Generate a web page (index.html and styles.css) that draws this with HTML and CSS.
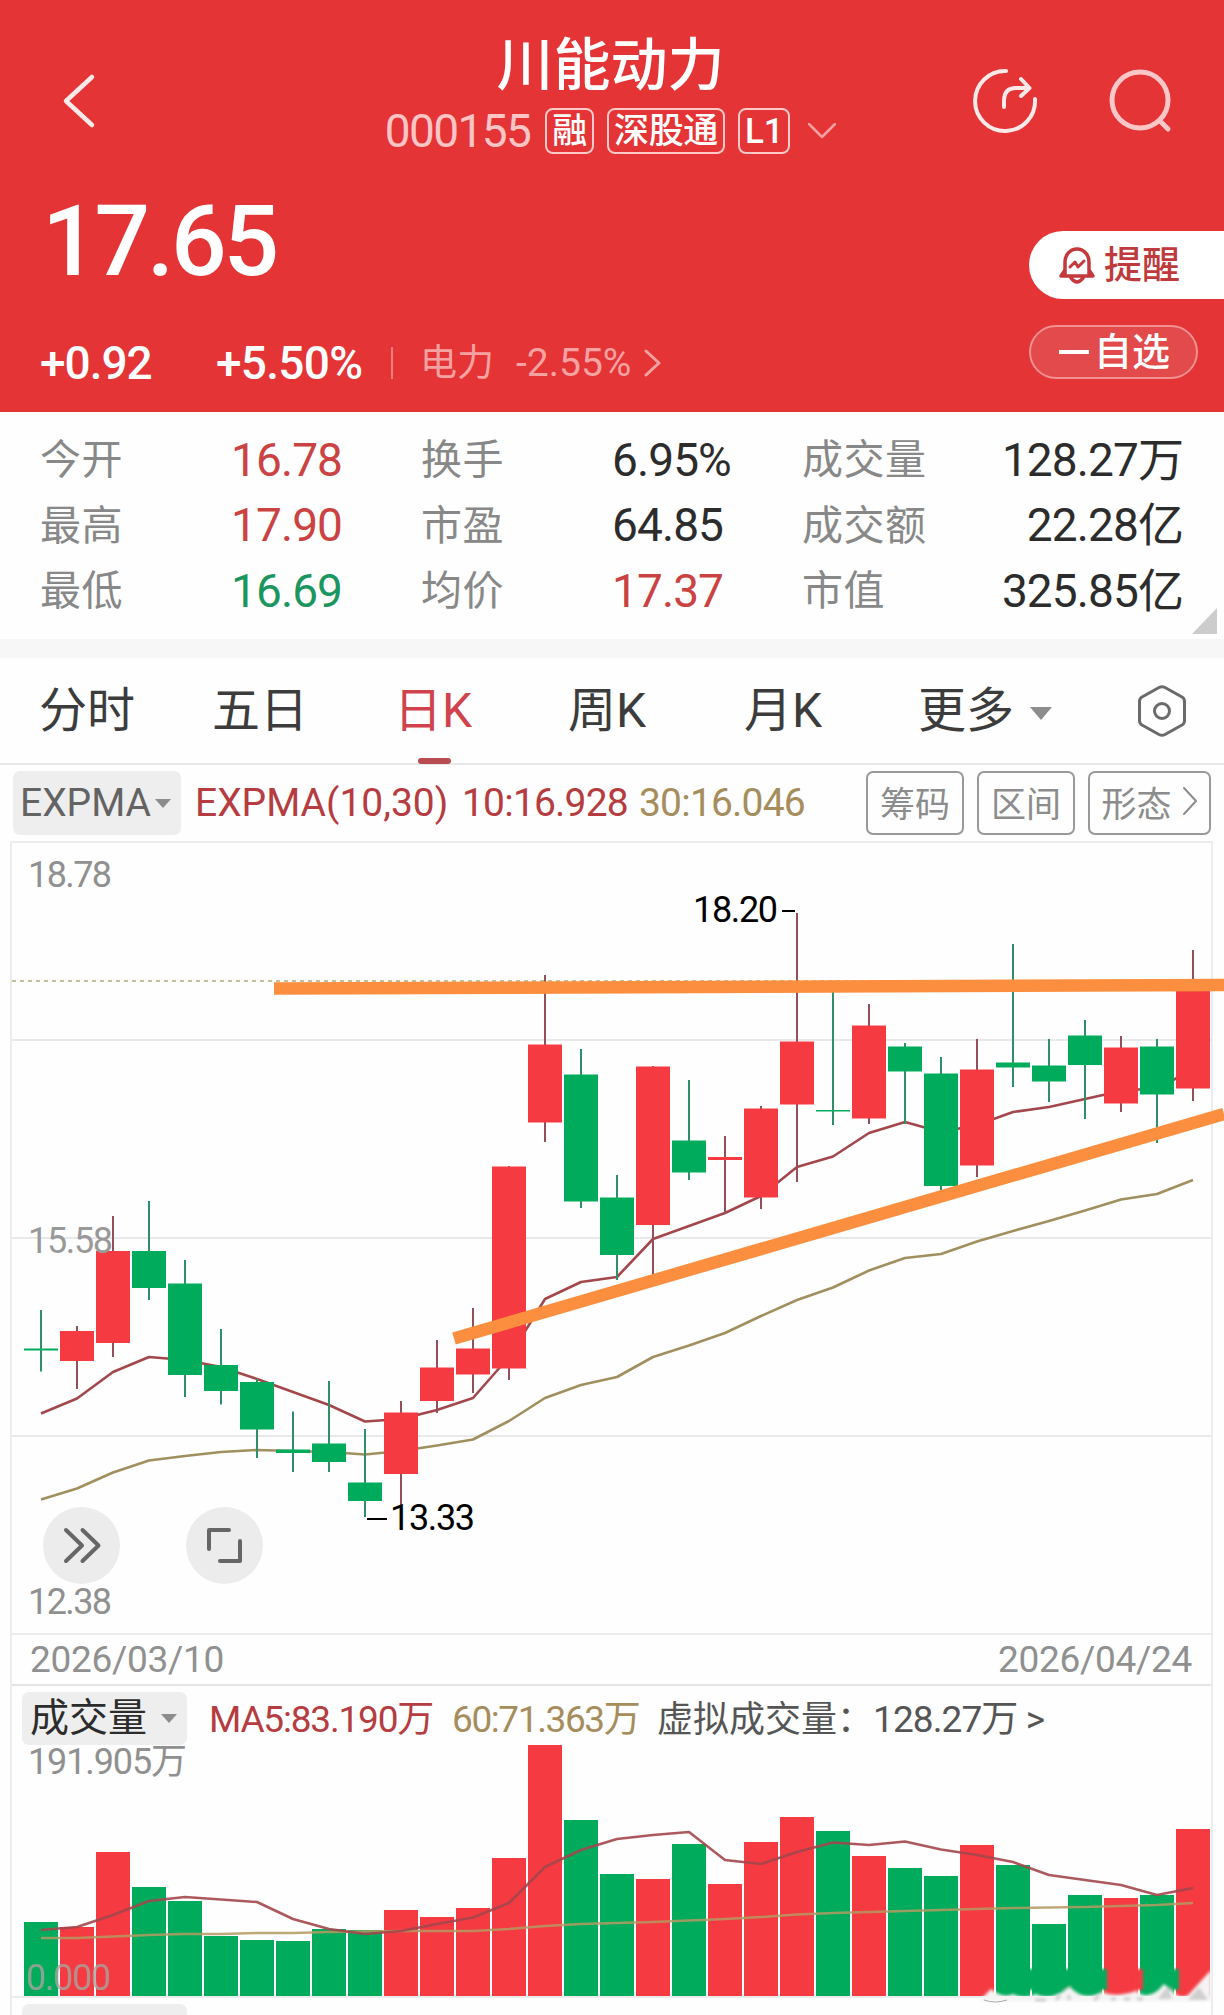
FILE: index.html
```html
<!DOCTYPE html>
<html lang="zh-CN">
<head>
  <meta charset="UTF-8">
  <title>川能动力 000155</title>
  <link rel="stylesheet" href="styles.css">
</head>
<body>
  <header class="header">
    <div class="nav">
      <svg class="icon-back" width="36" height="58" viewBox="0 0 36 58"><path d="M31 5 L5 29 L31 53"/></svg>
      <div class="nav-title">
        <h1>川能动力</h1>
        <div class="sub">
          <span class="code">000155</span>
          <span class="tag">融</span>
          <span class="tag">深股通</span>
          <span class="tag">L1</span>
          <svg class="icon-down" width="28" height="16" viewBox="0 0 28 16"><path d="M1 1 L14 14 L27 1"/></svg>
        </div>
      </div>
      <div class="nav-icons">
        <svg width="66" height="66" viewBox="0 0 66 66">
          <path d="M34 3 A30 30 0 1 0 63 31"/>
          <path d="M32 39 V33 Q32 20 44 20 H56 M49 11 L57.500 20 L49 28"/>
        </svg>
        <svg class="icon-search" width="64" height="66" viewBox="0 0 64 66">
          <circle cx="31" cy="32" r="28"/>
          <path d="M51 53 L59 61"/>
        </svg>
      </div>
    </div>
    <div class="quote">
      <div class="quote-left">
        <div class="price">17.65</div>
        <div class="change">
          <span class="diff">+0.92</span>
          <span class="pct">+5.50%</span>
          <span class="sector">电力</span>
          <span class="sector-pct">-2.55%</span>
          <svg width="18" height="28" viewBox="0 0 18 28"><path d="M2 2 L15 14 L2 26"/></svg>
        </div>
      </div>
      <div class="quote-right">
        <div class="btn-remind">
          <svg width="38" height="40" viewBox="0 0 38 40">
            <path d="M7 31 V17 A12 13 0 0 1 31 17 V31 M7 25 L3 31 H35 L31 25 M13 33 Q19 41 25 33"/>
            <path class="thin" d="M12 22 L17 17 L20 22 L26 16"/>
          </svg>
          <span>提醒</span>
        </div>
        <div class="btn-watch"><i></i><span>自选</span></div>
      </div>
    </div>
  </header>

  <section class="stats">
    <span class="label">今开</span><span class="up">16.78</span>
    <span class="label">换手</span><span>6.95%</span>
    <span class="label">成交量</span><span class="right">128.27万</span>
    <span class="label">最高</span><span class="up">17.90</span>
    <span class="label">市盈</span><span>64.85</span>
    <span class="label">成交额</span><span class="right">22.28亿</span>
    <span class="label">最低</span><span class="down">16.69</span>
    <span class="label">均价</span><span class="up">17.37</span>
    <span class="label">市值</span><span class="right">325.85亿</span>
    <div class="corner"></div>
  </section>

  <nav class="tabs">
    <span>分时</span>
    <span>五日</span>
    <span class="active">日K</span>
    <span>周K</span>
    <span>月K</span>
    <span class="more">更多<i class="caret"></i></span>
    <svg width="50" height="54" viewBox="0 0 50 54">
      <path d="M22 3.500 Q25 2 28 3.500 L45 13 Q47.500 14.500 47.500 17.500 V36.500 Q47.500 39.500 45 41 L28 50.500 Q25 52 22 50.500 L5 41 Q2.500 39.500 2.500 36.500 V17.500 Q2.500 14.500 5 13 Z"/>
      <circle cx="25" cy="27" r="7.500"/>
    </svg>
  </nav>

  <div class="indicator">
    <div class="select">EXPMA<i class="caret"></i></div>
    <span class="ema-name">EXPMA(10,30)</span>
    <span class="ema10">10:16.928</span>
    <span class="ema30">30:16.046</span>
    <div class="tools">
      <button>筹码</button>
      <button>区间</button>
      <button class="shape">形态<svg width="15" height="30" viewBox="0 0 15 30"><path d="M1 2 L13 15 L1 28"/></svg></button>
    </div>
  </div>

  <main class="panels">
    <svg id="kline" width="1199" height="790" viewBox="12 843 1199 790"></svg>
    <div class="dates"><span>2026/03/10</span><span>2026/04/24</span></div>
    <div class="vol-head">
      <div class="select">成交量<i class="caret"></i></div>
      <span class="ma5">MA5:83.190万</span>
      <span class="ma60">60:71.363万</span>
      <span class="virtual">虚拟成交量：</span>
      <span class="virtual-num">128.27万 &gt;</span>
    </div>
    <svg id="volume" width="1199" height="253" viewBox="12 1743 1199 253"></svg>
    <div class="next-panel"><div class="select"></div></div>
  </main>
  <script src="script.js"></script>
</body>
</html>
```

FILE: styles.css
```css
* {
  box-sizing: border-box;
}
body {
  margin: 0;
  width: 1224px;
  height: 2015px;
  overflow: hidden;
  background-color: #fefefe;
  font-family: Roboto, "Noto Sans CJK SC", sans-serif;
  line-height: 1;
  color: #2c2c2c;
}
svg {
  display: block;
  fill: none;
  stroke-linecap: round;
  stroke-linejoin: round;
}

/* header */
.header {
  height: 412px;
  background-color: #e43436;
  color: #fff;
}
.nav {
  display: grid;
  grid-template-columns: 1fr auto 1fr;
  height: 154px;
  padding-top: 36px;
}
.nav svg {
  stroke: #ffe9e9;
  stroke-width: 4;
}
.nav .icon-back {
  margin: 36px 0 0 61px;
  stroke-width: 4.500;
}
.nav-title {
  display: flex;
  flex-direction: column;
  align-items: center;
  gap: 14px;
  margin-right: 3px;
}
h1 {
  margin: 0;
  height: 58px;
  font-size: 57px;
  line-height: 59px;
  font-weight: 500;
}
.sub {
  display: flex;
  align-items: center;
  height: 46px;
}
.code {
  margin-right: 15px;
  font-size: 46px;
  letter-spacing: -1.600px;
  color: #ffc4c6;
}
.tag {
  height: 46px;
  margin-right: 13px;
  padding: 0 5px;
  border: 2px solid #ffc9c9;
  border-radius: 8px;
  font-size: 35px;
  line-height: 43px;
  font-weight: 500;
  letter-spacing: -.300px;
}
.nav .icon-down {
  margin-left: 5px;
  stroke: #f7a0a0;
  stroke-width: 2.500;
}
.nav-icons {
  display: flex;
  justify-content: flex-end;
  gap: 71px;
  margin: 32px 51px 0 0;
}
.nav .icon-search {
  stroke: #ffc6c8;
  stroke-width: 5;
}
.quote {
  display: flex;
  justify-content: space-between;
}
.price {
  margin: 39px 0 0 42px;
  font-size: 98px;
  font-weight: 500;
  letter-spacing: -3.200px;
}
.change {
  display: flex;
  align-items: center;
  height: 46px;
  margin: 49px 0 0 40px;
  font-size: 46px;
}
.diff {
  width: 176px;
  font-weight: 500;
  letter-spacing: -1px;
}
.pct {
  width: 177px;
  height: 32px;
  line-height: 32px;
  font-weight: 500;
  border-right: 2px solid #f07c7c;
  letter-spacing: -.700px;
}
.sector {
  margin-left: 27px;
  font-size: 37px;
  color: #f7a2a2;
}
.sector-pct {
  margin: 0 13px 0 22px;
  font-size: 39px;
  color: #f7a2a2;
}
.change svg {
  stroke: #f7a2a2;
  stroke-width: 3;
}
.quote-right {
  width: 195px;
  padding-top: 77px;
}
.btn-remind {
  display: flex;
  align-items: center;
  gap: 8px;
  height: 68px;
  padding-left: 29px;
  border-radius: 34px 0 0 34px;
  background-color: #fff;
  color: #bf3a3c;
  font-size: 38px;
  font-weight: 500;
}
.btn-remind svg {
  stroke: #c4393c;
  stroke-width: 3.500;
}
.btn-remind .thin {
  stroke-width: 3;
}
.btn-watch {
  display: flex;
  align-items: center;
  gap: 5px;
  width: 169px;
  height: 54px;
  margin-top: 26px;
  padding-left: 28px;
  border: 2px solid #f39092;
  border-radius: 27px;
  background-color: #e24a4c;
  font-size: 38px;
  font-weight: 500;
}
.btn-watch i {
  width: 30px;
  height: 4px;
  background-color: #fff;
}

/* stats */
.stats {
  position: relative;
  display: grid;
  grid-template-columns: 191px 190px 191px 190px 140px 1fr;
  grid-auto-rows: 65.500px;
  align-items: center;
  height: 246px;
  padding: 15px 41px 0 40px;
  border-bottom: 19px solid #f7f7f7;
  font-size: 46px;
  letter-spacing: -.900px;
  white-space: nowrap;
}
.label {
  padding-top: 2px;
  font-size: 41px;
  letter-spacing: .500px;
  color: #888;
}
.right {
  justify-self: end;
}
.up {
  color: #cb4243;
}
.down {
  color: #1a965e;
}
.corner {
  position: absolute;
  right: 7px;
  bottom: 5px;
  border-left: 25px solid transparent;
  border-bottom: 26px solid #ccc;
}

/* period tabs */
.tabs {
  display: flex;
  align-items: center;
  height: 107px;
  padding-left: 39px;
  border-bottom: 2px solid #e8e8e8;
  font-size: 48px;
  color: #3c3c3c;
}
.tabs span {
  position: relative;
  width: 173px;
  white-space: nowrap;
}
.tabs span:nth-child(2) {
  width: 182px;
}
.tabs span:nth-child(3) {
  width: 174px;
}
.tabs span:nth-child(4) {
  width: 176px;
}
.tabs span:nth-child(5) {
  width: 174px;
}
.tabs .more {
  width: 219px;
}
.tabs .active {
  color: #d0434d;
}
.tabs .active::after {
  content: "";
  position: absolute;
  left: 24px;
  bottom: -29px;
  width: 33px;
  height: 6px;
  border-radius: 3px;
  background-color: #b94b53;
}
.tabs svg {
  stroke: #6a6a6a;
  stroke-width: 3;
}
.caret {
  display: inline-block;
  border: 8px solid transparent;
  border-top: 9px solid #8c8c8c;
  border-bottom: 0;
}
.tabs .caret {
  margin-left: 16px;
  border-width: 13px 11px 0;
  vertical-align: 7px;
}

/* indicator row */
.indicator {
  display: flex;
  align-items: center;
  height: 76px;
  padding: 2px 13px 0;
  border-bottom: 2px solid transparent;
  font-size: 39px;
  white-space: nowrap;
}
.select {
  display: flex;
  align-items: center;
  border-radius: 7px;
  background-color: #eee;
}
.indicator .select {
  width: 168px;
  height: 64px;
  padding-left: 7px;
  gap: 4px;
  color: #636363;
}
.ema-name {
  width: 267px;
  margin-left: 14px;
  color: #b53c40;
}
.ema10 {
  width: 177px;
  letter-spacing: -.800px;
  color: #b53c40;
}
.ema30 {
  letter-spacing: -.800px;
  color: #a58d5c;
}
.tools {
  display: flex;
  gap: 13px;
  margin-left: auto;
}
.tools button {
  width: 98px;
  height: 64px;
  padding: 0 0 4px;
  border: 2px solid #999;
  border-radius: 7px;
  background: none;
  font: 35px Roboto, "Noto Sans CJK SC", sans-serif;
  color: #8c8c8c;
}
.tools .shape {
  display: flex;
  align-items: center;
  justify-content: center;
  gap: 11px;
  width: 123px;
}
.tools svg {
  stroke: #8c8c8c;
  stroke-width: 2;
}

/* chart panels */
.panels {
  height: 1174px;
  margin: 0 11px 0 10px;
  border: 2px solid #ececec;
  border-bottom: 0;
}
.panels > svg {
  overflow: visible;
  stroke-linecap: butt;
}
.panels text {
  font-size: 36px;
  stroke: none;
}
.dates {
  display: flex;
  justify-content: space-between;
  align-items: center;
  height: 53px;
  padding: 0 19px 0 18px;
  border-top: 2px solid #ececec;
  border-bottom: 2px solid #e4e4e4;
  font-size: 37px;
  letter-spacing: -.300px;
  color: #909090;
}
.vol-head {
  display: flex;
  align-items: center;
  height: 57px;
  padding: 7px 0 0 10px;
  font-size: 37px;
  white-space: nowrap;
}
.vol-head span {
  padding-top: 3px;
}
.panels .select {
  width: 165px;
  height: 53px;
  padding-left: 8px;
  gap: 14px;
  font-size: 39px;
}
.ma5 {
  width: 243px;
  margin-left: 22px;
  letter-spacing: -1.200px;
  color: #b53c40;
}
.ma60 {
  width: 205px;
  letter-spacing: -1.400px;
  color: #a58d5c;
}
.virtual {
  width: 216px;
  font-size: 36px;
  color: #555;
}
.virtual-num {
  color: #555;
  letter-spacing: -.900px;
}
.next-panel {
  height: 19px;
  padding: 6px 0 0 10px;
  border-top: 2px solid #ececec;
}
```

FILE: script.js
```js
var RED = '#f53a42';
var GREEN = '#00ab5c';
var RED_WICK = '#93505a';
var GREEN_WICK = '#2f8f68';
var MA_RED = '#a3474c';
var MA_GOLD = '#a0905f';

// [up, body top, body bottom, wick top, wick bottom, volume top]
var days = [
  [0, 1348.5, 1350.5, 1310, 1371.5, 1922],
  [1, 1331, 1361, 1326, 1389, 1927],
  [1, 1251, 1343, 1216, 1357, 1852],
  [0, 1251, 1288, 1201, 1300, 1887],
  [0, 1283.5, 1375, 1260, 1397, 1901],
  [0, 1365, 1391, 1329, 1404.5, 1936],
  [0, 1382, 1429.5, 1379, 1458, 1940],
  [0, 1449.5, 1453, 1411.5, 1472, 1941],
  [0, 1443.5, 1462, 1381, 1472, 1929],
  [0, 1482.5, 1501, 1429, 1517, 1930],
  [1, 1412.5, 1474, 1401, 1514, 1910],
  [1, 1367.5, 1401, 1340, 1413, 1917],
  [1, 1348.5, 1374.5, 1308, 1393, 1908],
  [1, 1166.5, 1368.5, 1166, 1380, 1858],
  [1, 1044.5, 1122.5, 975, 1142, 1745],
  [0, 1074.5, 1201.5, 1049, 1208, 1820],
  [0, 1197.5, 1255, 1175, 1280, 1874],
  [1, 1066.5, 1225, 1066, 1275, 1879],
  [0, 1140.5, 1172.5, 1080, 1180, 1844],
  [1, 1157, 1160, 1136, 1213, 1884],
  [1, 1108.5, 1197.5, 1106, 1209, 1842],
  [1, 1041.5, 1104.5, 913, 1182, 1817],
  [0, 1110, 1111.5, 985, 1125, 1831],
  [1, 1025.5, 1118.5, 1004, 1124, 1856],
  [0, 1046.5, 1071.5, 1043, 1124, 1868],
  [0, 1073.5, 1186, 1057, 1190, 1876],
  [1, 1069.5, 1165.5, 1039, 1177, 1845],
  [0, 1062.5, 1067.5, 944, 1087, 1865],
  [0, 1065.5, 1081.5, 1039, 1102, 1924],
  [0, 1035.5, 1065, 1020, 1119, 1895],
  [1, 1047.5, 1103.5, 1036, 1112, 1898],
  [0, 1046.5, 1094.5, 1039, 1143, 1895],
  [1, 990, 1088.5, 950, 1101, 1829]
];

var ema10 = [1413.5, 1398.5, 1372, 1357, 1360, 1367, 1379, 1392, 1405, 1421.5, 1419, 1410, 1398, 1357, 1299, 1282, 1277, 1239, 1226, 1213, 1196, 1167, 1156.5, 1133, 1122, 1132, 1125, 1112, 1107, 1099, 1091, 1088, 1070];
var ema30 = [1499.5, 1488.5, 1472.5, 1460.5, 1456, 1452, 1450, 1451, 1452, 1454.5, 1451, 1445.5, 1439.5, 1421, 1398, 1385, 1377, 1357, 1345.5, 1333, 1316, 1300, 1287.5, 1270.5, 1258, 1254, 1241.5, 1231, 1221, 1210.5, 1199.5, 1194, 1180];
var ma5 = [1930, 1927, 1915, 1901, 1897, 1899.5, 1902, 1919, 1929, 1934, 1931, 1924, 1917.5, 1903, 1867, 1850, 1839, 1835, 1832, 1860, 1864, 1852, 1842.5, 1845, 1841.5, 1849.5, 1855, 1862, 1875, 1880, 1885, 1895, 1888];
var ma60 = [1938, 1938, 1936.5, 1935, 1934, 1934, 1933, 1933, 1932, 1931.5, 1931, 1931, 1931, 1929, 1926, 1924, 1923, 1922, 1920.5, 1919, 1917, 1914.5, 1913, 1912, 1911, 1910, 1909, 1908, 1907.5, 1907, 1906, 1905, 1903];

function cx(i) {
  return 41 + i * 36;
}

function rect(x, y, w, h, fill) {
  return '<rect x="' + x + '" y="' + y + '" width="' + w + '" height="' + h + '" fill="' + fill + '"/>';
}

function line(x1, y1, x2, y2, color, width, extra) {
  return '<line x1="' + x1 + '" y1="' + y1 + '" x2="' + x2 + '" y2="' + y2 + '" stroke="' + color + '" stroke-width="' + width + '" ' + (extra || '') + '/>';
}

function curve(values, color, extra) {
  var pts = values.map(function (v, i) { return cx(i).toFixed(1) + ',' + v; }).join(' ');
  return '<polyline points="' + pts + '" stroke="' + color + '" stroke-width="2.6" ' + (extra || '') + '/>';
}

function label(x, y, w, str, color) {
  return '<text x="' + x + '" y="' + y + '" textLength="' + w + '" fill="' + color + '">' + str + '</text>';
}

function drawKline() {
  var s = '';
  [1040, 1238, 1436].forEach(function (y) {
    s += line(12, y, 1211, y, '#e9e9e9', 2);
  });
  s += line(12, 981, 1211, 981, '#b3ab78', 1.5, 'stroke-dasharray="4 4"');
  s += curve(ema30, MA_GOLD) + curve(ema10, MA_RED);
  days.forEach(function (d, i) {
    var x = cx(i);
    s += line(x, d[3], x, d[4], d[0] ? RED_WICK : GREEN_WICK, 2);
    s += rect(x - 17, d[1], 34, d[2] - d[1], d[0] ? RED : GREEN);
  });
  s += label(28, 887, 84, '18.78', '#909090');
  s += label(28, 1253, 85, '15.58', '#999');
  s += label(28, 1614, 84, '12.38', '#909090');
  s += label(693, 922, 85, '18.20', '#000') + line(782, 911, 795, 911, '#000', 2);
  s += label(390, 1530, 85, '13.33', '#000') + line(367, 1519, 387, 1519, '#000', 2);

  // trend lines
  s += line(274, 988.5, 1224, 985, '#fb8f3f', 12.5);
  s += line(454, 1338.5, 1224, 1114, '#fb8f3f', 12.5);

  // floating buttons
  s += '<circle cx="81.500" cy="1545.500" r="38.500" fill="#ececec"/><circle cx="224.500" cy="1545.500" r="38.500" fill="#ececec"/>';
  s += '<path d="M66 1530 L82 1545.500 L66 1561 M82.500 1530 L98.500 1545.500 L82.500 1561 M229 1530 H209 V1549 M240 1541 V1561 H220" stroke="#666" stroke-width="4" stroke-linecap="round"/>';
  document.getElementById('kline').innerHTML = s;
}

// smudge over the feet of the last few bars
function drawSmudge() {
  var s = '<defs><filter id="soft" x="-5%" y="-50%" width="110%" height="200%"><feGaussianBlur stdDeviation="1.6"/></filter></defs>';
  s += '<g filter="url(#soft)">';
  for (var i = 27; i < 32; i++) {
    s += rect(cx(i) + 14, 1969, 8, 21, days[i][0] ? RED : GREEN);
  }
  s += '<path d="M981 1999 L991 1989 Q1003 1999 1013 1994 Q1024 2000 1036 1994 Q1050 2002 1070 1987 Q1084 2002 1102 1992 Q1115 1998 1136 1991 Q1150 2002 1164 1984 L1171 1990 Q1182 2002 1190 1993 L1211 1970 V2001 H981 Z" fill="#f4f4f4"/>';
  s += '<path d="M1162 1993 L1168 1986 L1172 1999 H1158 Z M1188 2000 L1199 1987 L1208 2000 Z" fill="#cfcfcf"/>';
  s += '</g>';
  s += '<path d="M984 2000 Q995 2004 1007 2000" stroke="#aaa"/>';
  s += '<path d="M1035 2000 H1046 M1056 2000 L1060 1995 M1069 2000 V1995 M1094 2000 L1099 1996 M1111 1999 H1116 M1124 1999 H1130 M1137 1999 H1143" stroke="#ccc" stroke-width="3" filter="url(#soft)"/>';
  return s;
}

function drawVolume() {
  var s = '';
  days.forEach(function (d, i) {
    s += rect(cx(i) - 17, d[5], 34, 1996 - d[5], d[0] ? RED : GREEN);
  });
  s += drawSmudge();
  s += curve(ma60, '#b59a62', 'stroke-opacity="0.85"') + curve(ma5, MA_RED, 'stroke-opacity="0.9"');
  s += label(28, 1774, 159, '191.905万', '#909090');
  s += '<g opacity="0.8">' + label(26, 1990, 85, '0.000', '#a8a39c') + '</g>';
  document.getElementById('volume').innerHTML = s;
}

drawKline();
drawVolume();
```
